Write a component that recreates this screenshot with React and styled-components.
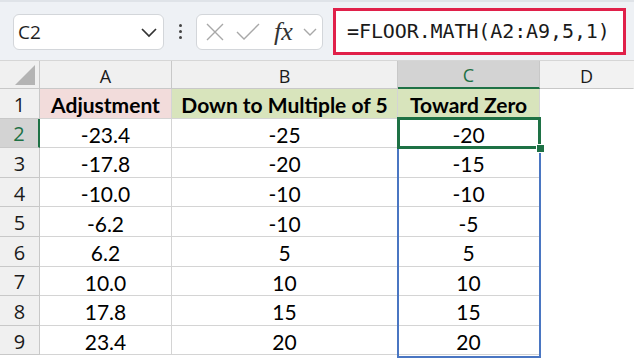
import React from "react";
import styled, { createGlobalStyle } from "styled-components";

const GlobalStyle = createGlobalStyle`
  html, body {
    margin: 0;
    padding: 0;
    background: #ffffff;
  }
  * { box-sizing: border-box; }
`;

const rows = [
  ["-23.4", "-25", "-20"],
  ["-17.8", "-20", "-15"],
  ["-10.0", "-10", "-10"],
  ["-6.2", "-10", "-5"],
  ["6.2", "5", "5"],
  ["10.0", "10", "10"],
  ["17.8", "15", "15"],
  ["23.4", "20", "20"],
];

const App = () => {
  return (
    <Wrapper>
      <GlobalStyle />
      <Toolbar>
        <NameBox>
          <span>C2</span>
          <svg width="18" height="12" viewBox="0 0 18 12">
            <path d="M2 3 L9 10 L16 3" fill="none" stroke="#333" strokeWidth="1.7" />
          </svg>
        </NameBox>
        <Dots>
          <i />
          <i />
          <i />
        </Dots>
        <IconBox>
          <svg width="20" height="20" viewBox="0 0 20 20">
            <path d="M2 2 L18 18 M18 2 L2 18" stroke="#a8a8a8" strokeWidth="1.4" />
          </svg>
          <svg width="26" height="20" viewBox="0 0 26 20">
            <path d="M2 10 L9 17 L24 2" fill="none" stroke="#a8a8a8" strokeWidth="1.4" />
          </svg>
          <Fx>fx</Fx>
          <svg width="14" height="10" viewBox="0 0 14 10">
            <path d="M1 2 L7 8 L13 2" fill="none" stroke="#a8a8a8" strokeWidth="1.4" />
          </svg>
        </IconBox>
        <FormulaBar>=FLOOR.MATH(A2:A9,5,1)</FormulaBar>
      </Toolbar>
      <Sheet>
        <Corner>
          <svg width="20" height="20" viewBox="0 0 20 20">
            <path d="M20 0 L20 20 L0 20 Z" fill="#b4b4b4" />
          </svg>
        </Corner>
        <ColHead>A</ColHead>
        <ColHead>B</ColHead>
        <ColHead $active>C</ColHead>
        <ColHead $last>D</ColHead>

        <RowHead>1</RowHead>
        <Cell $bold $bg="#f2dcdb">Adjustment</Cell>
        <Cell $bold $bg="#d8e4bc">Down to Multiple of 5</Cell>
        <Cell $bold $bg="#d8e4bc">Toward Zero</Cell>
        <Blank />

        {rows.map((r, i) => (
          <React.Fragment key={i}>
            <RowHead $active={i === 0}>{i + 2}</RowHead>
            <Cell>{r[0]}</Cell>
            <Cell>{r[1]}</Cell>
            <Cell>{r[2]}</Cell>
            <Blank />
          </React.Fragment>
        ))}
        <Range />
        <Active>
          <Handle />
        </Active>
      </Sheet>
    </Wrapper>
  );
};

const Wrapper = styled.div`
  width: 634px;
  height: 358px;
  overflow: hidden;
  background: #ffffff;
`;

const Toolbar = styled.div`
  height: 61px;
  background: #eef1f5;
  border-top: 2px solid #dfe3e8;
  border-bottom: 1px solid #d6d6d6;
  display: flex;
  align-items: center;
  padding: 0 8px 0 13px;
`;

const NameBox = styled.div`
  width: 151px;
  height: 36px;
  margin-top: 1px;
  background: #ffffff;
  border: 1px solid #d3d6da;
  border-radius: 6px;
  display: flex;
  align-items: center;
  justify-content: space-between;
  padding: 0 5px 0 4px;
  font-family: "Open Sans", "Noto Sans", sans-serif;
  font-size: 19px;
  color: #1f1f1f;
`;

const Dots = styled.div`
  width: 32px;
  display: flex;
  flex-direction: column;
  align-items: center;
  gap: 3px;
  margin-top: 1px;
  i {
    width: 3px;
    height: 3px;
    border-radius: 50%;
    background: #444;
  }
`;

const IconBox = styled.div`
  width: 127px;
  height: 36px;
  margin-top: 1px;
  background: #ffffff;
  border: 1px solid #d3d6da;
  border-radius: 6px;
  display: flex;
  align-items: center;
  gap: 10px;
  padding: 0 4px 0 8px;
`;

const Fx = styled.span`
  font-family: "Liberation Serif", "DejaVu Serif", serif;
  font-style: italic;
  font-size: 26px;
  color: #333;
  margin-left: 3px;
  line-height: 1;
`;

const FormulaBar = styled.div`
  margin-left: 10px;
  width: 293px;
  height: 47px;
  background: #ffffff;
  border: 3px solid #e0204a;
  display: flex;
  align-items: center;
  padding-left: 11px;
  font-family: "DejaVu Sans Mono", "Liberation Mono", monospace;
  font-size: 20px;
  letter-spacing: -0.1px;
  color: #1a1a1a;
`;

const Sheet = styled.div`
  position: relative;
  display: grid;
  grid-template-columns: 40px 132px 226px 142px 1fr;
  grid-template-rows: 28px repeat(9, 29.6px);
  font-family: "Lato", "Open Sans", sans-serif;
`;

const Corner = styled.div`
  background: #f0f0f0;
  border-right: 1px solid #c8c8c8;
  border-bottom: 1px solid #c8c8c8;
  display: flex;
  align-items: flex-end;
  justify-content: flex-end;
  padding: 0 4px 3px 0;
`;

const ColHead = styled.div`
  background: ${(p) => (p.$active ? "#d3d3d3" : p.$last ? "#f2f2f2" : "#f0f0f0")};
  color: ${(p) => (p.$active ? "#1e7145" : "#1a1a1a")};
  border-right: 1px solid ${(p) => (p.$last ? "transparent" : "#c8c8c8")};
  border-bottom: ${(p) => (p.$active ? "2px solid #1e7145" : "1px solid #c8c8c8")};
  display: flex;
  align-items: center;
  justify-content: center;
  font-family: "Open Sans", "Noto Sans", sans-serif;
  font-size: 18px;
  padding-top: 2px;
`;

const RowHead = styled.div`
  background: ${(p) => (p.$active ? "#d3d3d3" : "#f0f0f0")};
  color: ${(p) => (p.$active ? "#1e7145" : "#1a1a1a")};
  border-right: ${(p) => (p.$active ? "2px solid #1e7145" : "1px solid #c8c8c8")};
  border-bottom: 1px solid #c8c8c8;
  display: flex;
  align-items: center;
  justify-content: center;
  font-family: "Open Sans", "Noto Sans", sans-serif;
  font-size: 20px;
  padding-top: 2px;
`;

const Cell = styled.div`
  background: ${(p) => p.$bg || "#ffffff"};
  border-right: 1px solid #d4d4d4;
  border-bottom: 1px solid #d4d4d4;
  display: flex;
  align-items: center;
  justify-content: center;
  font-size: 21px;
  font-weight: ${(p) => (p.$bold ? 700 : 400)};
  color: #000000;
  padding-top: 3px;
  white-space: nowrap;
`;

const Blank = styled.div`
  background: #ffffff;
`;

const Range = styled.div`
  position: absolute;
  left: 397px;
  top: 57px;
  width: 144px;
  height: 240px;
  border: 2px solid #4a76c2;
  pointer-events: none;
`;

const Active = styled.div`
  position: absolute;
  left: 397px;
  top: 56px;
  width: 144px;
  height: 32px;
  border: 3px solid #1e7145;
  pointer-events: none;
`;

const Handle = styled.div`
  position: absolute;
  right: -7px;
  bottom: -7px;
  width: 9px;
  height: 9px;
  background: #1e7145;
  border: 1px solid #ffffff;
`;

export default App;
